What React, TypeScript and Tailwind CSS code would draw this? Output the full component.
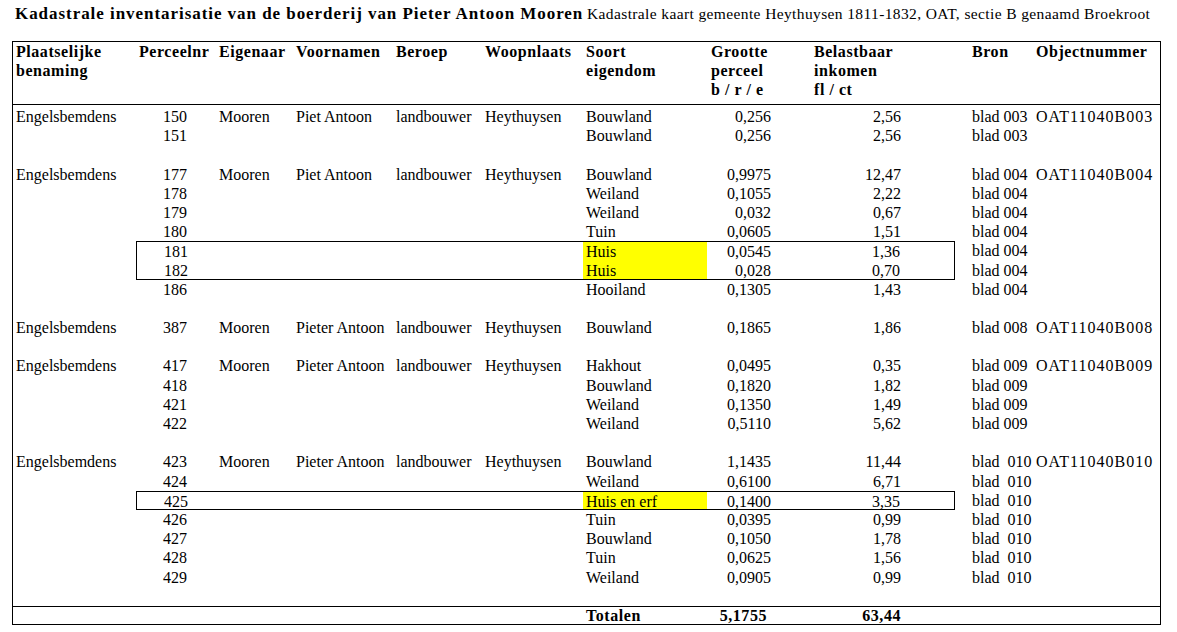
import React from "react";

type Row = {
  c?: string[];
  yellow?: boolean;
  box?: "top" | "bottom" | "single";
};

const W = [
  "w-[123px]",
  "w-[80px]",
  "w-[77px]",
  "w-[100px]",
  "w-[89px]",
  "w-[101px]",
  "w-[124px]",
  "w-[104px]",
  "w-[144px]",
  "w-[78px]",
  "w-[127px]",
];

const HP = [
  "pl-[3px]",
  "pl-[3px]",
  "pl-[3px]",
  "pl-[3px]",
  "pl-[3px]",
  "pl-[3px]",
  "pl-[3px]",
  "pl-[4px]",
  "pl-[3px]",
  "pl-[17px]",
  "pl-[3px]",
];

const DP = [
  "pl-[3px]",
  "pl-[27px]",
  "pl-[3px]",
  "pl-[3px]",
  "pl-[3px]",
  "pl-[3px]",
  "pl-[3px]",
  "pr-[40px] text-right",
  "pr-[54px] text-right",
  "pl-[17px]",
  "pl-[3px] tracking-[1px]",
];

const header = [
  ["Plaatselijke", "benaming"],
  ["Perceelnr"],
  ["Eigenaar"],
  ["Voornamen"],
  ["Beroep"],
  ["Woopnlaats"],
  ["Soort", "eigendom"],
  ["Grootte", "perceel", "b / r / e"],
  ["Belastbaar", "inkomen", "fl / ct"],
  ["Bron"],
  ["Objectnummer"],
];

const s = (n: string, soort: string, g: string, b: string, bron: string): string[] => [
  "",
  n,
  "",
  "",
  "",
  "",
  soort,
  g,
  b,
  bron,
  "",
];

const rows: Row[] = [
  { c: ["Engelsbemdens", "150", "Mooren", "Piet Antoon", "landbouwer", "Heythuysen", "Bouwland", "0,256", "2,56", "blad 003", "OAT11040B003"] },
  { c: s("151", "Bouwland", "0,256", "2,56", "blad 003") },
  {},
  { c: ["Engelsbemdens", "177", "Mooren", "Piet Antoon", "landbouwer", "Heythuysen", "Bouwland", "0,9975", "12,47", "blad 004", "OAT11040B004"] },
  { c: s("178", "Weiland", "0,1055", "2,22", "blad 004") },
  { c: s("179", "Weiland", "0,032", "0,67", "blad 004") },
  { c: s("180", "Tuin", "0,0605", "1,51", "blad 004") },
  { c: s("181", "Huis", "0,0545", "1,36", "blad 004"), yellow: true, box: "top" },
  { c: s("182", "Huis", "0,028", "0,70", "blad 004"), yellow: true, box: "bottom" },
  { c: s("186", "Hooiland", "0,1305", "1,43", "blad 004") },
  {},
  { c: ["Engelsbemdens", "387", "Mooren", "Pieter Antoon", "landbouwer", "Heythuysen", "Bouwland", "0,1865", "1,86", "blad 008", "OAT11040B008"] },
  {},
  { c: ["Engelsbemdens", "417", "Mooren", "Pieter Antoon", "landbouwer", "Heythuysen", "Hakhout", "0,0495", "0,35", "blad 009", "OAT11040B009"] },
  { c: s("418", "Bouwland", "0,1820", "1,82", "blad 009") },
  { c: s("421", "Weiland", "0,1350", "1,49", "blad 009") },
  { c: s("422", "Weiland", "0,5110", "5,62", "blad 009") },
  {},
  { c: ["Engelsbemdens", "423", "Mooren", "Pieter Antoon", "landbouwer", "Heythuysen", "Bouwland", "1,1435", "11,44", "blad  010", "OAT11040B010"] },
  { c: s("424", "Weiland", "0,6100", "6,71", "blad  010") },
  { c: s("425", "Huis en erf", "0,1400", "3,35", "blad  010"), yellow: true, box: "single" },
  { c: s("426", "Tuin", "0,0395", "0,99", "blad  010") },
  { c: s("427", "Bouwland", "0,1050", "1,78", "blad  010") },
  { c: s("428", "Tuin", "0,0625", "1,56", "blad  010") },
  { c: s("429", "Weiland", "0,0905", "0,99", "blad  010") },
  {},
];

function cellBox(row: Row, i: number): string {
  if (!row.box || i < 1 || i > 8) return "";
  const parts: string[] = ["border-black"];
  if (row.box === "top" || row.box === "single") parts.push("border-t");
  if (row.box === "bottom" || row.box === "single") parts.push("border-b");
  if (i === 1) parts.push("border-l");
  if (i === 8) parts.push("border-r");
  return parts.join(" ");
}

export default function App() {
  return (
    <div className="w-[1177px] h-[632px] bg-white text-black font-['Liberation_Serif',serif] overflow-hidden">
      <div className="flex h-[41px] pt-[4px] pl-[15px] leading-[20px] whitespace-nowrap">
        <div className="w-[572px] overflow-hidden font-bold text-[17px] tracking-[0.95px]">
          Kadastrale inventarisatie van de boerderij van Pieter Antoon Mooren
        </div>
        <div className="text-[15.5px] tracking-[0.38px]">
          Kadastrale kaart gemeente Heythuysen 1811-1832, OAT, sectie B genaamd Broekroot
        </div>
      </div>
      <div className="ml-[12px] w-[1149px] border border-black">
        <div className="flex h-[63px] border-b border-black font-bold text-[16px] tracking-[0.55px] leading-[19px] whitespace-nowrap">
          {header.map((h, i) => (
            <div key={i} className={`${W[i]} ${HP[i]} shrink-0 overflow-hidden`}>
              {h.map((l, j) => (
                <div key={j}>{l}</div>
              ))}
            </div>
          ))}
        </div>
        <div className="pt-[2px] text-[16px] leading-[19px] whitespace-pre">
          {rows.map((r, ri) => (
            <div key={ri} className="flex h-[19.2px]">
              {W.map((w, i) => (
                <div
                  key={i}
                  className={`${w} ${DP[i]} ${cellBox(r, i)} ${r.yellow && i === 6 ? "bg-[#ffff00]" : ""} shrink-0 h-[19.2px] overflow-visible`}
                >
                  {r.c ? r.c[i] : ""}
                </div>
              ))}
            </div>
          ))}
        </div>
        <div className="flex h-[18px] border-t border-black font-bold text-[16px] tracking-[0.55px] leading-[18px] whitespace-nowrap">
          <div className="w-[123px] shrink-0" />
          <div className="w-[80px] shrink-0" />
          <div className="w-[77px] shrink-0" />
          <div className="w-[100px] shrink-0" />
          <div className="w-[89px] shrink-0" />
          <div className="w-[101px] shrink-0" />
          <div className="w-[124px] shrink-0 pl-[3px]">Totalen</div>
          <div className="w-[104px] shrink-0 pr-[44px] text-right">5,1755</div>
          <div className="w-[144px] shrink-0 pr-[54px] text-right">63,44</div>
          <div className="w-[78px] shrink-0" />
          <div className="w-[127px] shrink-0" />
        </div>
      </div>
    </div>
  );
}
